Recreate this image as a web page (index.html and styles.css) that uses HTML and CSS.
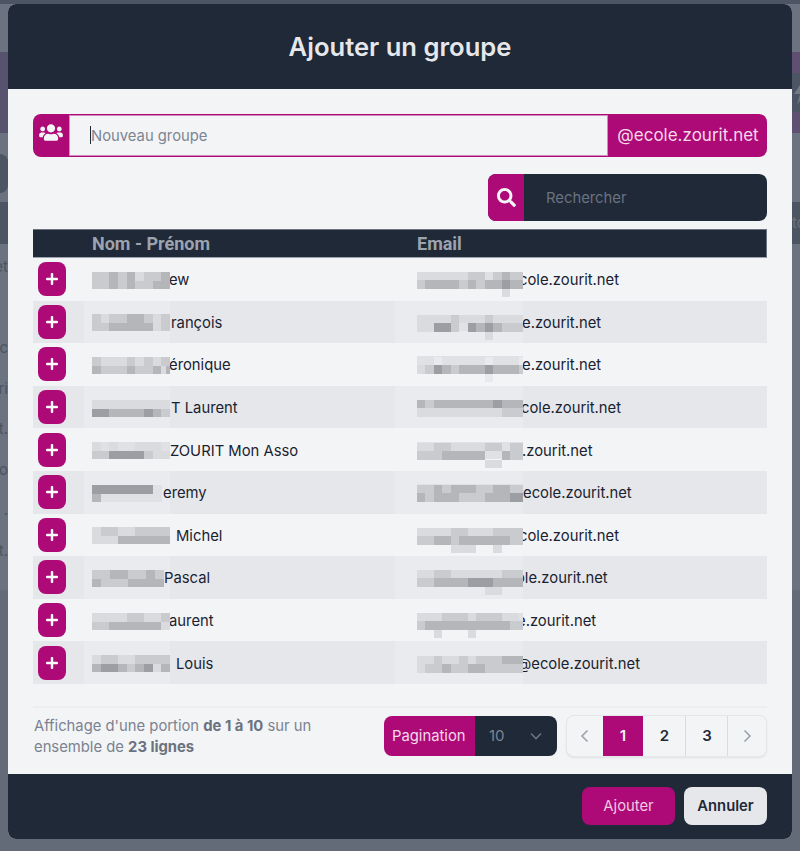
FILE: index.html
```html
<!DOCTYPE html>
<html lang="fr">
<head>
<meta charset="utf-8">
<title>Ajouter un groupe</title>
<link rel="stylesheet" href="styles.css">
</head>
<body>
<div class="page">
  <div class="bg-top"></div>
  <div class="bg-gap-a"></div>
  <div class="bg-purple">
    <div class="bg-purple-a"></div>
    <div class="bg-bolt">
      <svg width="16" height="26" viewBox="0 0 16 26"><path class="bolt" d="M11 0 1 15h6l-3 11 11-16H8z"/></svg>
    </div>
    <div class="bg-purple-b"></div>
  </div>
  <div class="bg-gap-b"><div class="bg-pill"></div></div>
  <div class="bg-band"><span class="bg-end">to</span></div>
  <div class="bg-list">
    <div class="bg-line"><span class="bg-tail">et</span></div>
    <div class="bg-line"></div>
    <div class="bg-line"><span class="bg-tail">c</span></div>
    <div class="bg-line"><span class="bg-tail">ri</span></div>
    <div class="bg-line"><span class="bg-tail">t.</span></div>
    <div class="bg-line"><span class="bg-tail">o</span></div>
    <div class="bg-line"><span class="bg-tail">.</span></div>
    <div class="bg-line"><span class="bg-tail">t.</span></div>
  </div>
  <div class="bg-bottom"></div>
</div>

<div class="modal">
  <header class="modal-head"><h1>Ajouter un groupe</h1></header>
  <main class="modal-body">
    <div class="group-field">
      <span class="addon-icon">
        <svg width="24" height="19" viewBox="0 0 640 512"><path fill="currentColor" d="M96 224c35.3 0 64-28.7 64-64s-28.7-64-64-64-64 28.7-64 64 28.7 64 64 64zm448 0c35.3 0 64-28.7 64-64s-28.7-64-64-64-64 28.7-64 64 28.7 64 64 64zm32 32h-64c-17.6 0-33.5 7.1-45.1 18.6 40.3 22.1 68.9 62 75.1 109.4h66c17.7 0 32-14.3 32-32v-32c0-35.3-28.7-64-64-64zm-256 0c61.9 0 112-50.1 112-112S381.9 32 320 32 208 82.1 208 144s50.1 112 112 112zm76.8 32h-8.3c-20.8 10-43.9 16-68.5 16s-47.6-6-68.5-16h-8.3C179.6 288 128 339.6 128 403.2V432c0 26.5 21.5 48 48 48h288c26.5 0 48-21.5 48-48v-28.8c0-63.6-51.6-115.2-115.2-115.2zm-223.7-13.4C161.5 263.1 145.6 256 128 256H64c-35.3 0-64 28.7-64 64v32c0 17.7 14.3 32 32 32h65.9c6.3-47.4 34.9-87.3 75.2-109.4z"/></svg>
      </span>
      <div class="group-input"><span class="caret"></span><input type="text" placeholder="Nouveau groupe"></div>
      <span class="addon-domain">@ecole.zourit.net</span>
    </div>

    <div class="search-row">
      <div class="search">
        <span class="search-icon">
          <svg width="19" height="19" viewBox="0 0 512 512"><path fill="currentColor" d="M505 442.7L405.3 343c-4.5-4.5-10.6-7-17-7H372c27.6-35.3 44-79.7 44-128C416 93.1 322.9 0 208 0S0 93.1 0 208s93.1 208 208 208c48.3 0 92.7-16.4 128-44v16.3c0 6.4 2.5 12.5 7 17l99.7 99.7c9.4 9.4 24.6 9.4 33.9 0l28.3-28.3c9.4-9.4 9.4-24.6.1-34zM208 336c-70.7 0-128-57.2-128-128 0-70.7 57.2-128 128-128 70.7 0 128 57.2 128 128 0 70.7-57.2 128-128 128z"/></svg>
        </span>
        <input type="text" placeholder="Rechercher">
      </div>
    </div>

    <div class="table">
      <div class="thead"><span>Nom - Prénom</span><span>Email</span></div>

      <div class="row">
        <button class="add"><svg width="12" height="12" viewBox="0 0 12 12"><path class="plus" d="M6 1v10M1 6h10"/></svg></button>
        <div class="cell name"><svg class="px" width="78" height="17" viewBox="0 0 9 2" preserveAspectRatio="none"><path class="p1" d="M5 .5h1M2 1.5h0"/><path class="p2" d="M0 .5h2M3 .5h1M6 .5h2M0 1.5h2M3 1.5h1M5 1.5h1M6 1.5h1"/><path class="p3" d="M2 .5h1M4 .5h1M8 .5h1M2 1.5h1M4 1.5h1M7 1.5h2"/></svg><span class="sl1">ew</span></div>
        <div class="cell mail"><svg class="px" width="106" height="34" viewBox="0 0 12.5 4" preserveAspectRatio="none"><path class="p1" d="M0 1.5h1M3 1.5h3M1 1.5h2M10 .5h0M10 3.5h1"/><path class="p2" d="M0 2.5h1M6 1.5h1M7 1.5h1M9 1.5h1M11 1.5h1.5M5 2.5h1M7 2.5h1"/><path class="p3" d="M1 2.5h4M6 2.5h1M8 2.5h2M11 2.5h1.5M10 1.5h1"/><path class="p4" d="M10 2.5h1"/></svg><span class="sl4">cole.zourit.net</span></div>
      </div>

      <div class="row alt">
        <button class="add"><svg width="12" height="12" viewBox="0 0 12 12"><path class="plus" d="M6 1v10M1 6h10"/></svg></button>
        <div class="cell name"><svg class="px" width="78" height="17" viewBox="0 0 9 2" preserveAspectRatio="none"><path class="p1" d="M1 .5h1M7 .5h1M7 1.5h1"/><path class="p2" d="M0 .5h1M2 .5h2M6 .5h1M8 .5h1M0 1.5h2M8 1.5h1"/><path class="p3" d="M4 .5h2M2 1.5h4M6 1.5h1"/></svg><span class="sr1">rançois</span></div>
        <div class="cell mail"><svg class="px" width="106" height="34" viewBox="0 0 12.5 4" preserveAspectRatio="none"><path class="p1" d="M0 1.5h4M5 1.5h3M9 1.5h3.5M0 2.5h2M8 3.5h1"/><path class="p2" d="M4 1.5h1M8 1.5h1M4 2.5h1M6 2.5h1M10 2.5h2.5"/><path class="p3" d="M7 2.5h1M9 2.5h1"/><path class="p4" d="M2 2.5h2M6 2.5h1M8 2.5h1"/></svg><span class="sl1">e.zourit.net</span></div>
      </div>

      <div class="row">
        <button class="add"><svg width="12" height="12" viewBox="0 0 12 12"><path class="plus" d="M6 1v10M1 6h10"/></svg></button>
        <div class="cell name"><svg class="px" width="78" height="17" viewBox="0 0 9 2" preserveAspectRatio="none"><path class="p1" d="M1 .5h3M5 .5h1M7 .5h1M8 1.5h.5"/><path class="p2" d="M0 .5h1M4 .5h1M6 .5h1M1 1.5h3M5 1.5h2M8 .5h1"/><path class="p3" d="M0 1.5h1M4 1.5h1M7 1.5h1M8.5 1.5h.5"/></svg><span class="sl1">éronique</span></div>
        <div class="cell mail"><svg class="px" width="106" height="34" viewBox="0 0 12.5 4" preserveAspectRatio="none"><path class="p0" d="M2 1.5h1M8 1.5h1M12 1.5h.5M8 3.5h1"/><path class="p1" d="M0 2.5h1M9 1.5h0"/><path class="p2" d="M1 2.5h1M4 2.5h1M12 2.5h.5"/><path class="p3" d="M3 2.5h1M5 2.5h3M9 2.5h3"/><path class="p4" d="M2 2.5h1M8 2.5h1"/></svg><span class="sl1">e.zourit.net</span></div>
      </div>

      <div class="row alt">
        <button class="add"><svg width="12" height="12" viewBox="0 0 12 12"><path class="plus" d="M6 1v10M1 6h10"/></svg></button>
        <div class="cell name"><svg class="px" width="78" height="17" viewBox="0 0 9 2" preserveAspectRatio="none"><path class="p1" d="M0 .5h9"/><path class="p3" d="M2 1.5h4M7 1.5h1"/><path class="p4" d="M0 1.5h2M6 1.5h1"/><path class="p2" d="M8 1.5h1"/></svg><span class="sr1">T Laurent</span></div>
        <div class="cell mail"><svg class="px" width="106" height="34" viewBox="0 0 12.5 4" preserveAspectRatio="none"><path class="p3" d="M0 1.5h1M2 1.5h7M10 1.5h2.5"/><path class="p2" d="M1 1.5h1"/><path class="p4" d="M9 1.5h1"/><path class="p1" d="M0 2.5h10"/><path class="p2" d="M10 2.5h2.5"/></svg><span class="sl2">cole.zourit.net</span></div>
      </div>

      <div class="row">
        <button class="add"><svg width="12" height="12" viewBox="0 0 12 12"><path class="plus" d="M6 1v10M1 6h10"/></svg></button>
        <div class="cell name"><svg class="px" width="78" height="17" viewBox="0 0 9 2" preserveAspectRatio="none"><path class="p1" d="M2 .5h1M5 .5h3M0 .5h1"/><path class="p2" d="M0 1.5h2M6 1.5h1"/><path class="p4" d="M2 1.5h3M5 1.5h1"/><path class="p1" d="M7 1.5h2"/></svg><span>ZOURIT Mon Asso</span></div>
        <div class="cell mail"><svg class="px" width="106" height="34" viewBox="0 0 12.5 4" preserveAspectRatio="none"><path class="p1" d="M0 1.5h2M4 1.5h4M8 3.5h2"/><path class="p2" d="M2 1.5h2M8 1.5h2M0 2.5h3M11 1.5h1.5M11 2.5h1.5"/><path class="p3" d="M3 2.5h5M10 2.5h1"/></svg><span class="sl1">.zourit.net</span></div>
      </div>

      <div class="row alt">
        <button class="add"><svg width="12" height="12" viewBox="0 0 12 12"><path class="plus" d="M6 1v10M1 6h10"/></svg></button>
        <div class="cell name"><svg class="px" width="70" height="17" viewBox="0 0 8 2" preserveAspectRatio="none"><path class="p4" d="M0 .5h7"/><path class="p3" d="M0 1.5h1"/></svg><span class="sr1">eremy</span></div>
        <div class="cell mail"><svg class="px" width="106" height="34" viewBox="0 0 12.5 4" preserveAspectRatio="none"><path class="p2" d="M0 1.5h2M3 1.5h1M7 1.5h2M11 1.5h1.5M1 2.5h1M5 2.5h3"/><path class="p3" d="M2 1.5h1M4 1.5h3M9 1.5h2M0 2.5h1M2 2.5h3M8 2.5h3"/><path class="p4" d="M11 2.5h1.5"/></svg><span>ecole.zourit.net</span></div>
      </div>

      <div class="row">
        <button class="add"><svg width="12" height="12" viewBox="0 0 12 12"><path class="plus" d="M6 1v10M1 6h10"/></svg></button>
        <div class="cell name"><svg class="px" width="78" height="17" viewBox="0 0 9 2" preserveAspectRatio="none"><path class="p1" d="M0 .5h1M3 .5h2M0 1.5h3"/><path class="p2" d="M1 .5h2M5 .5h4"/><path class="p3" d="M3 1.5h6"/></svg><span class="sr6">Michel</span></div>
        <div class="cell mail"><svg class="px" width="106" height="34" viewBox="0 0 12.5 4" preserveAspectRatio="none"><path class="p1" d="M0 1.5h4M6 1.5h3M4 3.5h3M9 3.5h1"/><path class="p2" d="M4 1.5h2M9 1.5h3.5M0 2.5h2M4 2.5h1M11 2.5h1.5"/><path class="p3" d="M2 2.5h2M5 2.5h6"/></svg><span class="sl4">cole.zourit.net</span></div>
      </div>

      <div class="row alt">
        <button class="add"><svg width="12" height="12" viewBox="0 0 12 12"><path class="plus" d="M6 1v10M1 6h10"/></svg></button>
        <div class="cell name"><svg class="px" width="72" height="17" viewBox="0 0 8 2" preserveAspectRatio="none"><path class="p2" d="M0 .5h2M4 .5h2M7 .5h1M1 1.5h3"/><path class="p3" d="M2 .5h2M6 .5h1M0 1.5h1M4 1.5h4"/></svg><span>Pascal</span></div>
        <div class="cell mail"><svg class="px" width="106" height="34" viewBox="0 0 12.5 4" preserveAspectRatio="none"><path class="p1" d="M0 1.5h2M4 1.5h4M8 1.5h2M8 3.5h2"/><path class="p2" d="M2 1.5h2M10 1.5h2.5M0 2.5h2"/><path class="p3" d="M2 2.5h4M9 2.5h3.5"/><path class="p4" d="M6 2.5h3"/></svg><span class="sl7">ole.zourit.net</span></div>
      </div>

      <div class="row">
        <button class="add"><svg width="12" height="12" viewBox="0 0 12 12"><path class="plus" d="M6 1v10M1 6h10"/></svg></button>
        <div class="cell name"><svg class="px" width="78" height="17" viewBox="0 0 9 2" preserveAspectRatio="none"><path class="p1" d="M0 .5h4M6 .5h2M8 1.5h1"/><path class="p2" d="M4 .5h2M8 .5h1M0 1.5h2"/><path class="p3" d="M2 1.5h6"/></svg><span class="sl1">aurent</span></div>
        <div class="cell mail"><svg class="px" width="106" height="34" viewBox="0 0 12.5 4" preserveAspectRatio="none"><path class="p1" d="M0 1.5h3M6 1.5h1M2 3.5h1M6 3.5h1M10 1.5h2"/><path class="p2" d="M3 1.5h3M7 1.5h3M0 2.5h1M11 2.5h1.5"/><path class="p3" d="M1 2.5h10"/></svg><span class="sl6">e.zourit.net</span></div>
      </div>

      <div class="row alt">
        <button class="add"><svg width="12" height="12" viewBox="0 0 12 12"><path class="plus" d="M6 1v10M1 6h10"/></svg></button>
        <div class="cell name"><svg class="px" width="78" height="17" viewBox="0 0 9 2" preserveAspectRatio="none"><path class="p1" d="M0 .5h1M3 .5h2M7 1.5h2"/><path class="p2" d="M1 .5h2M5 .5h4M4 1.5h1M8 1.5h0"/><path class="p3" d="M0 1.5h1M3 1.5h1M5 1.5h1M8 1.5h1"/><path class="p4" d="M1 1.5h2M6 1.5h1"/></svg><span class="sr6">Louis</span></div>
        <div class="cell mail"><svg class="px" width="106" height="34" viewBox="0 0 12.5 4" preserveAspectRatio="none"><path class="p1" d="M0 1.5h2M3 1.5h2M6 1.5h1M0 2.5h1"/><path class="p2" d="M2 1.5h1M5 1.5h1M7 1.5h3M1 2.5h2M4 2.5h2M8 2.5h4.5"/><path class="p3" d="M10 1.5h2.5M3 2.5h1M6 2.5h2"/></svg><span class="sl6">@ecole.zourit.net</span></div>
      </div>
    </div>

    <div class="tfoot">
      <p class="info">Affichage d'une portion <b>de 1 à 10</b> sur un ensemble de <b>23 lignes</b></p>
      <div class="per-page">
        <span class="per-label">Pagination</span>
        <span class="per-value">10
          <svg width="12" height="8" viewBox="0 0 12 8"><path class="chev-down" d="M1 1.5 6 6.5 11 1.5"/></svg>
        </span>
      </div>
      <nav class="pager">
        <a class="pg arrow prev"><svg width="9" height="14" viewBox="0 0 9 14"><path class="chev" d="M7.5 1.5 2 7l5.5 5.5"/></svg></a>
        <a class="pg current">1</a>
        <a class="pg two">2</a>
        <a class="pg three">3</a>
        <a class="pg arrow next"><svg width="9" height="14" viewBox="0 0 9 14"><path class="chev" d="M1.5 1.5 7 7l-5.5 5.5"/></svg></a>
      </nav>
    </div>
  </main>
  <footer class="modal-foot">
    <button class="btn primary">Ajouter</button>
    <button class="btn light">Annuler</button>
  </footer>
</div>
</body>
</html>
```

FILE: styles.css
```css
* { box-sizing: border-box; }
html, body { margin: 0; padding: 0; }
body {
  width: 800px;
  height: 851px;
  overflow: hidden;
  background: #6b7280;
  font-family: Inter, "Liberation Sans", sans-serif;
}

/* dimmed page behind the modal */
.page { height: 851px; display: flex; flex-direction: column; background: #6b7280; }
.bg-top { height: 4px; background: #4b5563; flex: none; }
.bg-gap-a { height: 48px; background: #6b7280; flex: none; }
.bg-purple { height: 81px; flex: none; display: flex; flex-direction: column; background: #57536e; }
.bg-purple-a { height: 21px; background: #5f4f72; margin-left: 792px; }
.bg-bolt { height: 39px; margin-left: 792px; background: #4b5563; padding: 6px 0 0 1px; }
.bolt { fill: #737a87; }
.bg-purple-b { height: 21px; background: #5f4f72; margin-left: 792px; }
.bg-gap-b { height: 69px; flex: none; padding-top: 21px; }
.bg-pill { width: 8px; height: 39px; background: #4b5563; border-radius: 0 8px 8px 0; }
.bg-band { height: 42px; flex: none; background: #4b5563; display: flex; justify-content: flex-end; align-items: center; }
.bg-end { width: 8px; overflow: hidden; color: #6b7280; font-size: 15px; line-height: 20px; }
.bg-list { flex: none; height: 346px; padding-top: 2px; }
.bg-line { width: 8px; height: 40.6px; overflow: hidden; display: flex; justify-content: flex-end; align-items: center; }
.bg-tail { flex: none; font-size: 15px; color: #4b5563; }
.bg-bottom { flex: 1; background: #636b78; }

/* modal */
.modal {
  position: absolute;
  left: 8px;
  top: 4px;
  width: 784px;
  height: 835px;
  border-radius: 8px;
  overflow: hidden;
  display: flex;
  flex-direction: column;
  background: #f3f4f6;
}
.modal-head {
  height: 85px;
  flex: none;
  background: #1f2937;
  display: flex;
  align-items: center;
  justify-content: center;
}
.modal-head h1 {
  margin: 0;
  font-size: 25.6px;
  line-height: 32px;
  font-weight: 600;
  color: #e5e7eb;
}
.modal-body { flex: 1; padding: 25px 25px 0; display: flex; flex-direction: column; }

/* group field */
.group-field { height: 43px; display: flex; flex: none; }
.addon-icon {
  width: 35px;
  flex: none;
  background: #ae0a77;
  color: #f3f4f6;
  border-radius: 8px 0 0 8px;
  display: flex;
  justify-content: center;
  padding-top: 9px;
}
.group-input {
  position: relative;
  flex: 1;
  border: 1px solid #ae0a77;
  box-shadow: inset 0 0 0 1px rgba(174, 10, 119, .45);
  background: #f3f4f6;
}
.group-input input {
  width: 100%;
  height: 100%;
  border: 0;
  outline: 0;
  background: transparent;
  padding: 0 0 0 22px;
  font: 400 14.8px Inter, sans-serif;
  color: #1f2937;
}
.group-input input::placeholder { color: #7d8592; opacity: 1; }
.caret {
  position: absolute;
  left: 21px;
  top: 11px;
  width: 1px;
  height: 18px;
  background: #1f2937;
}
.addon-domain {
  width: 158px;
  flex: none;
  background: #ae0a77;
  color: #f3d9ea;
  border-radius: 0 8px 8px 0;
  font-size: 17px;
  line-height: 43px;
  text-align: center;
  white-space: nowrap;
}

/* search */
.search-row { display: flex; justify-content: flex-end; padding-top: 17px; flex: none; }
.search {
  width: 279px;
  height: 47px;
  display: flex;
  border-radius: 8px;
  overflow: hidden;
  background: #1f2937;
}
.search-icon {
  width: 36px;
  flex: none;
  background: #ae0a77;
  color: #f3f4f6;
  display: flex;
  align-items: center;
  justify-content: center;
}
.search input {
  flex: 1;
  min-width: 0;
  border: 0;
  outline: 0;
  background: transparent;
  padding: 0 0 0 22px;
  font: 400 14.8px Inter, sans-serif;
  color: #e5e7eb;
}
.search input::placeholder { color: #6b7280; opacity: 1; }

/* table */
.table { margin-top: 8px; flex: none; }
.thead {
  height: 29px;
  background: #1f2937;
  display: grid;
  grid-template-columns: 325px 1fr;
  padding-left: 59px;
  align-items: center;
  border-top: 1px solid #6b7280;
  border-bottom: 1px solid #9ca3af;
  border-right: 1px solid #6b7280;
  color: #9ca3af;
  font-family: Roboto, Inter, sans-serif;
  font-weight: 700;
  font-size: 18px;
}
.row {
  height: 42.6px;
  display: grid;
  grid-template-columns: 59px 325px 1fr;
  align-items: center;
  color: #1a2230;
  font-size: 14.8px;
}
.row.alt { background: #e5e7eb; }
.add {
  width: 28px;
  height: 34px;
  margin-left: 5px;
  padding: 0;
  border: 0;
  border-radius: 8px;
  background: #ae0a77;
  display: flex;
  align-items: center;
  justify-content: center;
}
.plus { fill: none; stroke: #f9fafb; stroke-width: 2.4; stroke-linecap: round; }
.cell {
  position: relative;
  height: 100%;
  padding-top: 2px;
  display: flex;
  align-items: center;
  white-space: nowrap;
}
.cell::before {
  content: "";
  position: absolute;
  top: 0;
  bottom: 0;
  background: #f3f4f6;
  opacity: .3;
}
.name::before { left: -8px; width: 86px; }
.mail::before { left: -22px; width: 128px; }
.cell > * { position: relative; }
.px { flex: none; shape-rendering: crispEdges; z-index: 1; }
.name .px { background: #dfe1e4; }
.mail .px { background: linear-gradient(transparent 25%, #dfe1e4 25% 75%, transparent 75%); }
.px path { fill: none; stroke-width: 1; }
.p0 { stroke: #e9eaed; }
.p1 { stroke: #d9dbdf; }
.p2 { stroke: #c9cbcf; }
.p3 { stroke: #b5b6ba; }
.p4 { stroke: #9c9ea3; }

/* how far a name's visible end sits from the blur */
.sl1 { margin-left: -1px; }
.sl2 { margin-left: -2px; }
.sl4 { margin-left: -4px; }
.sl6 { margin-left: -6px; }
.sl7 { margin-left: -7px; }
.sr1 { margin-left: 1px; }
.sr6 { margin-left: 6px; }

/* table footer */
.tfoot {
  margin-top: 22px;
  height: 68px;
  border-top: 2px solid #eceef1;
  display: flex;
  align-items: flex-start;
  flex: none;
}
.info {
  margin: 8px 0 0 1px;
  width: 350px;
  padding-right: 60px;
  font-size: 14.8px;
  line-height: 21px;
  color: #7b8290;
}
.info b { font-weight: 700; color: #6b7280; }
.per-page {
  width: 173px;
  height: 40px;
  margin-top: 8px;
  border-radius: 8px;
  overflow: hidden;
  display: flex;
  font-size: 14.8px;
}
.per-label {
  width: 91px;
  background: #ae0a77;
  color: #f3d9ea;
  line-height: 40px;
  padding-left: 8px;
}
.per-value {
  flex: 1;
  background: #1f2937;
  color: #7b8494;
  font-size: 15px;
  display: flex;
  align-items: center;
  justify-content: space-between;
  padding: 0 15px 0 14px;
}
.chev-down { fill: none; stroke: #6b7280; stroke-width: 1.6; }
.pager {
  margin: 7px 0 0 9px;
  width: 201px;
  height: 42px;
  display: flex;
  border: 1px solid #e5e7eb;
  border-radius: 8px;
  box-shadow: 0 1px 2px rgba(0,0,0,.08);
  overflow: hidden;
  background: #f3f4f6;
}
.pg {
  display: flex;
  align-items: center;
  justify-content: center;
  font-size: 15px;
  font-weight: 600;
  color: #1f2937;
  flex: none;
}
.arrow { color: #9ca3af; }
.chev { fill: none; stroke: #9ca3af; stroke-width: 1.6; }
.prev { width: 36px; padding-right: 2px; }
.current { width: 40px; background: #ae0a77; color: #f3f4f6; }
.two { width: 43px; padding-left: 1px; border-right: 1px solid #d8dbe0; }
.three { width: 42px; padding-left: 1px; border-right: 1px solid #d8dbe0; }
.next { width: 38px; }

/* modal footer */
.modal-foot {
  height: 65px;
  flex: none;
  background: #1f2937;
  display: flex;
  justify-content: flex-end;
  align-items: flex-start;
  gap: 9px;
  padding: 13px 25px 0 0;
}
.btn {
  height: 38px;
  border: 0;
  border-radius: 8px;
  font: 400 14.8px Inter, sans-serif;
  padding: 0;
}
.primary { width: 93px; background: #ae0a77; color: #f0c9e0; }
.light { width: 83px; background: #e5e7eb; color: #1f2937; font-weight: 600; }
```
